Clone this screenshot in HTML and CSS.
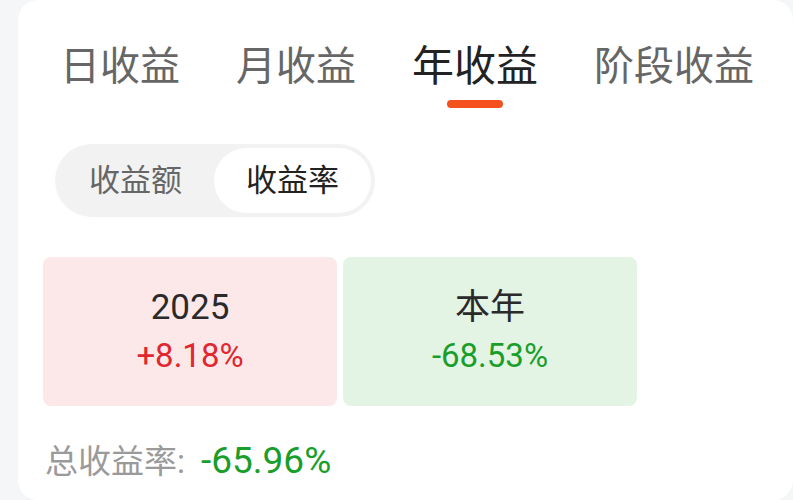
FILE: index.html
```html
<!DOCTYPE html>
<html lang="zh-CN">
<head>
    <meta charset="UTF-8">
    <meta name="viewport" content="width=device-width, initial-scale=1.0">
    <title>收益</title>
    <link rel="stylesheet" href="styles.css">
</head>
<body>
    <div class="panel">
        <!-- Period tabs -->
        <div class="tabs">
            <div class="tab">日收益</div>
            <div class="tab">月收益</div>
            <div class="tab active">年收益<span class="tab-line"></span></div>
            <div class="tab">阶段收益</div>
        </div>

        <!-- Amount / rate switch -->
        <div class="switch">
            <div class="switch-item">收益额</div>
            <div class="switch-item active">收益率</div>
        </div>

        <!-- Yearly cards -->
        <div class="cards">
            <div class="card up">
                <div class="card-title">2025</div>
                <div class="card-value">+8.18%</div>
            </div>
            <div class="card down">
                <div class="card-title">本年</div>
                <div class="card-value">-68.53%</div>
            </div>
        </div>

        <div class="total">
            <span class="total-label">总收益率:</span>
            <span class="total-value">-65.96%</span>
        </div>
    </div>
</body>
</html>
```

FILE: styles.css
```css
body {
    margin: 0;
    padding: 0;
    background-color: #f5f6f8;
    font-family: Roboto, "Noto Sans CJK SC", sans-serif;
    color: #222;
    overflow: hidden;
}
.panel {
    margin-left: 18px;
    height: 500px;
    background-color: #fff;
    border-radius: 20px;
    padding-left: 25px;
    box-sizing: border-box;
}

/* Tabs */
.tabs {
    display: flex;
    align-items: flex-start;
    gap: 56px;
    padding-top: 43px;
    margin-left: 17px;
}
.tab {
    display: flex;
    flex-direction: column;
    align-items: center;
    font-size: 40px;
    line-height: 48px;
    color: #666;
}
.tab.active {
    font-size: 42px;
    color: #222;
}
.tab-line {
    display: block;
    width: 56px;
    height: 8px;
    margin-top: 9px;
    border-radius: 4px;
    background-color: #f4511e;
}

/* Switch */
.switch {
    display: flex;
    width: fit-content;
    margin-top: 36px;
    margin-left: 12px;
    padding: 4px;
    background-color: #f2f2f3;
    border-radius: 37px;
}
.switch-item {
    height: 65px;
    line-height: 65px;
    padding: 0 32px;
    font-size: 31px;
    color: #666;
    border-radius: 33px;
}
.switch-item:first-child {
    padding-left: 30px;
}
.switch-item.active {
    background-color: #fff;
    color: #222;
}

/* Cards */
.cards {
    display: flex;
    gap: 6px;
    margin-top: 40px;
}
.card {
    width: 294px;
    height: 149px;
    border-radius: 8px;
    display: flex;
    flex-direction: column;
    align-items: center;
    justify-content: center;
}
.card.up {
    background-color: #fde8e9;
}
.card.down {
    background-color: #e3f4e5;
}
.card-title {
    font-size: 35px;
    line-height: 46px;
    color: #2a2a2a;
}
.card-value {
    margin-top: 2px;
    font-size: 33px;
    line-height: 46px;
}
.card.up .card-value {
    color: #e0262e;
}
.card.down .card-value {
    color: #1a9e2a;
}

/* Total */
.total {
    margin-top: 32px;
    margin-left: 2px;
    line-height: 46px;
}
.total-label {
    font-size: 33px;
    color: #9a9a9a;
}
.total-value {
    margin-left: 12px;
    font-size: 37px;
    color: #1a9e2a;
}
```
